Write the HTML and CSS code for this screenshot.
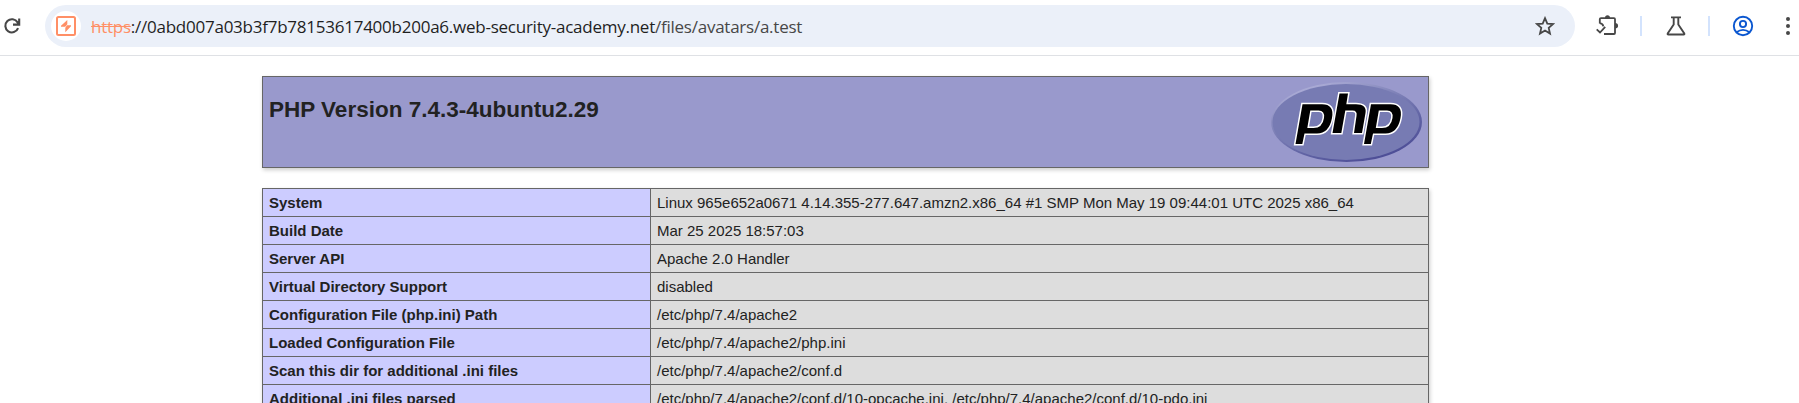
FILE: index.html
```html
<!DOCTYPE html>
<html lang="en">
<head>
<meta charset="utf-8">
<title>PHP 7.4.3-4ubuntu2.29 - phpinfo()</title>
<link rel="stylesheet" href="styles.css">
</head>
<body>
<header class="toolbar">
  <svg class="reload" width="24" height="24" viewBox="0 0 24 24"><path d="M18.1 14.2A6.6 6.6 0 1 1 17.6 8.4L18.6 10.6M19.2 4.500V10.600H13" fill="none" stroke="#474747" stroke-width="2.1"/></svg>
  <div class="omnibox">
    <span class="site">
      <svg width="20" height="20" viewBox="0 0 20 20"><rect x="1" y="1" width="18" height="18" rx="1.5" fill="none" stroke="#ff8f66" stroke-width="2"/><path d="M11.300 4L5 9.800V10.800H9.200L11.300 8.200zM9.300 16.200L15 10.200V9.200H11L9.300 11.800z" fill="#ff8f66"/></svg>
    </span>
    <span class="url"><s class="scheme">https</s><span class="host">://0abd007a03b3f7b78153617400b200a6.web-security-academy.net</span><span class="path">/files/avatars/a.test</span></span>
    <svg class="star" width="20" height="20" viewBox="0 0 20 20"><path d="M10 2.2L12.3 7.6L18 8.1L13.7 11.9L15 17.6L10 14.6L5 17.6L6.3 11.9L2 8.1L7.7 7.6Z" fill="none" stroke="#474747" stroke-width="1.8"/></svg>
  </div>
  <div class="actions">
    <svg class="puzzle" width="24" height="24" viewBox="0 0 24 24"><path d="M3.800 9.500V5.2Q3.800 4.2 5 4.2H18Q19 4.2 19 5.2V19Q19 20 18 20H8M3.800 9.200Q6.800 9.500 7.300 12.300" fill="none" stroke="#474747" stroke-width="1.8"/><path d="M9 4A2.5 2.8 0 0 1 14 4zM19 9A3 2.7 0 0 1 19 14.500z" fill="#474747"/><path d="M.700 15.400L4 18.500L9.200 12.800" fill="none" stroke="#474747" stroke-width="1.800"/></svg>
    <i class="divider"></i>
    <svg class="flask" width="20" height="20" viewBox="0 0 20 20"><path d="M5 1.400H15M7.700 1.500V8.500L1.700 17.500Q1.300 18.500 2.300 18.500H17.700Q18.700 18.500 18.300 17.500L12.300 8.500V1.500" fill="none" stroke="#474747" stroke-width="1.900"/></svg>
    <i class="divider second"></i>
    <svg class="profile" width="22" height="22" viewBox="0 0 22 22"><g fill="none" stroke="#0b57d0" stroke-width="1.900"><circle cx="11" cy="11" r="9.200"/><circle cx="11" cy="9" r="3.100"/><path d="M4.500 17.300Q11 12.500 17.500 17.300"/></g></svg>
    <svg class="menu" width="6" height="20" viewBox="0 0 6 20"><g fill="#474747"><circle cx="3" cy="3" r="2"/><circle cx="3" cy="10" r="2"/><circle cx="3" cy="17" r="2"/></g></svg>
  </div>
</header>
<main class="page">
  <section class="banner">
    <h1>PHP Version 7.4.3-4ubuntu2.29</h1>
    <svg class="logo" width="151" height="80" viewBox="0 0 151 80">
      <defs><linearGradient id="rim" x1="0.2" y1="0" x2="0.8" y2="1"><stop offset="0" stop-color="#b4b4dc"/><stop offset="0.35" stop-color="#8285ba"/><stop offset="0.65" stop-color="#6265a5"/><stop offset="1" stop-color="#484893"/></linearGradient></defs>
      <ellipse cx="75.500" cy="40" rx="75.500" ry="40" fill="url(#rim)"/>
      <ellipse cx="75" cy="40" rx="73.500" ry="38" fill="#777bb3"/>
      <g class="mark">
        <path d="M31.500 22.300H51Q63.500 22.300 61 36Q58 51.500 46 51.500H33.500L31.300 62H24.500ZM39.300 28.500L36.300 46H42.500Q51.500 46 53 36Q54 28.500 47.500 28.500Z" fill-rule="evenodd"/>
        <path d="M68.500 11.500H77L75.300 22.300H85Q96 22.300 94.500 31L91 51H83L85.500 34Q86.500 28.500 81.500 28.500H74.300L70.300 51H61.500Z"/>
        <path d="M100 22.300H119.500Q132 22.300 129.500 36Q126.500 51.500 114.500 51.500H102L99.800 62H93ZM107.800 28.500L104.800 46H111Q120 46 121.500 36Q122.500 28.500 116 28.500Z" fill-rule="evenodd"/>
      </g>
    </svg>
  </section>
  <table class="info">
    <tr><th>System</th><td>Linux 965e652a0671 4.14.355-277.647.amzn2.x86_64 #1 SMP Mon May 19 09:44:01 UTC 2025 x86_64</td></tr>
    <tr><th>Build Date</th><td>Mar 25 2025 18:57:03</td></tr>
    <tr><th>Server API</th><td>Apache 2.0 Handler</td></tr>
    <tr><th>Virtual Directory Support</th><td>disabled</td></tr>
    <tr><th>Configuration File (php.ini) Path</th><td>/etc/php/7.4/apache2</td></tr>
    <tr><th>Loaded Configuration File</th><td>/etc/php/7.4/apache2/php.ini</td></tr>
    <tr><th>Scan this dir for additional .ini files</th><td>/etc/php/7.4/apache2/conf.d</td></tr>
    <tr><th>Additional .ini files parsed</th><td>/etc/php/7.4/apache2/conf.d/10-opcache.ini, /etc/php/7.4/apache2/conf.d/10-pdo.ini</td></tr>
  </table>
</main>
</body>
</html>
```

FILE: styles.css
```css
* { box-sizing: border-box; }
body { margin: 0; height: 403px; overflow: hidden; background: #fff; color: #222; font-family: "Liberation Sans", Arial, sans-serif; }
svg { display: block; flex: none; }
.toolbar { display: flex; align-items: flex-start; height: 56px; border-bottom: 1px solid #dfe1e5; }
.reload { margin: 14px 21px 0 0; }
.omnibox { display: flex; align-items: center; width: 1530px; height: 42px; margin-top: 5px; padding: 0 20px 0 6px; border-radius: 21px; background: #ebf0f9; }
.site { display: flex; align-items: center; justify-content: center; width: 30px; height: 30px; border-radius: 50%; background: #fff; }
.url { margin-left: 10px; padding-top: 2px; font: 17px/24px "Open Sans", "Noto Sans", sans-serif; letter-spacing: -0.245px; white-space: nowrap; }
.scheme { color: #ff8f66; }
.host { color: #1f1f1f; }
.path { color: #474747; }
.star { margin-left: auto; }
.actions { display: flex; align-items: center; height: 42px; margin-top: 5px; }
.puzzle { margin-left: 21px; }
.divider { width: 2px; height: 20px; margin-left: 20px; background: #d3e3fd; }
.flask { margin-left: 24px; }
.divider.second { margin-left: 22px; }
.profile { margin-left: 22px; }
.menu { margin-left: 31px; }
.page { width: 1167px; margin: 20px 0 0 262px; }
.banner { display: flex; justify-content: space-between; height: 92px; padding: 5px 6px; border: 1px solid #666; background: #99c; box-shadow: 1px 2px 4px #ccc; }
h1 { margin: 15px 0 0; font-size: 22.5px; line-height: 26px; }
.mark { stroke: #fff; stroke-width: 3px; paint-order: stroke; fill: #000; }
.info { width: 1167px; margin-top: 20px; border-collapse: collapse; table-layout: fixed; box-shadow: 1px 2px 4px #ccc; font-size: 15px; line-height: 17px; }
th, td { height: 28px; padding: 5px 6px; border: 1px solid #666; text-align: left; }
th { width: 388px; background: #ccf; }
td { background: #ddd; }
```
